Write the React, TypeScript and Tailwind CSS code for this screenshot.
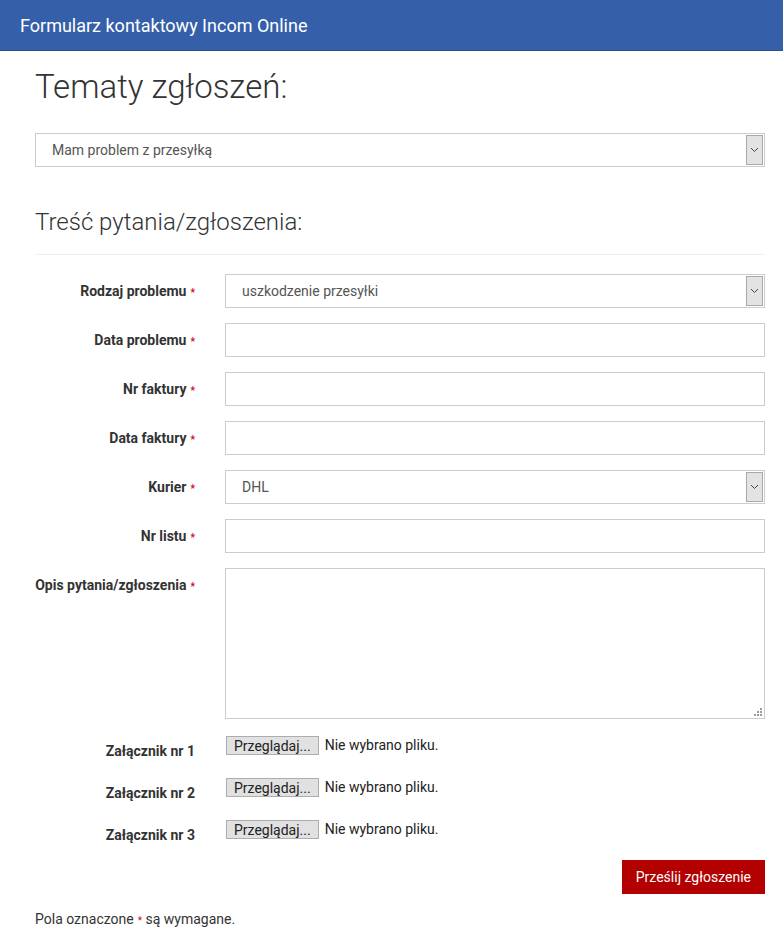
import { ReactNode } from 'react';

const font = { fontFamily: 'Roboto, "Noto Sans", sans-serif' };

function Req() {
  return <span className="ml-1 text-[10px] text-[#d0021b]">*</span>;
}

function ArrowBox() {
  return (
    <div className="pointer-events-none absolute right-[1px] top-[1px] bottom-[1px] w-[17px] bg-[#e3e3e3] border border-[#a9a9a9] flex items-center justify-center">
      <svg width="9" height="6" viewBox="0 0 9 6" fill="none">
        <path d="M1 1l3.5 3.5L8 1" stroke="#444" strokeWidth="1" />
      </svg>
    </div>
  );
}

function SelectBox({ value }: { value: string }) {
  return (
    <div className="relative h-[34px] w-full border border-[#cccccc] bg-white">
      <div className="h-full flex items-center pl-4 text-[14px] text-[#555]">{value}</div>
      <ArrowBox />
    </div>
  );
}

function Row({ label, children }: { label: string; children: ReactNode }) {
  return (
    <div className="flex mb-[15px]">
      <div className="w-[160px] shrink-0 text-right pt-[7px] text-[14px] leading-5 font-bold text-[#333] whitespace-nowrap">
        {label}
        <Req />
      </div>
      <div className="ml-[30px] flex-1">{children}</div>
    </div>
  );
}

function Input() {
  return <div className="h-[34px] w-full border border-[#cccccc] bg-white" />;
}

function Grip() {
  // resize handle dots in the textarea corner
  const dots = [
    [6, 0],
    [3, 3], [6, 3],
    [0, 6], [3, 6], [6, 6],
  ];
  return (
    <svg className="pointer-events-none absolute right-[3px] bottom-[3px]" width="8" height="8" viewBox="0 0 8 8">
      {dots.map(([x, y]) => (
        <rect key={`${x}-${y}`} x={x} y={y} width="2" height="2" fill="#9a9a9a" />
      ))}
    </svg>
  );
}

function FileRow({ n }: { n: number }) {
  return (
    <div className="flex h-[42px]">
      <div className="w-[160px] shrink-0 text-right pt-[5px] text-[14px] leading-5 font-bold text-[#333]">Załącznik nr {n}</div>
      <div className="ml-[31px] flex items-start gap-[6px] text-[14px] text-[#222]">
        <span className="h-[19px] px-[7px] flex items-center bg-[#e1e1e1] border border-[#adadad] leading-none">Przeglądaj...</span>
        <span className="leading-[19px]">Nie wybrano pliku.</span>
      </div>
    </div>
  );
}

export default function App() {
  return (
    <div className="min-h-screen bg-white" style={font}>
      <div className="h-[51px] bg-[#3560a9] border-b border-[#2a4d88] flex items-center pl-5">
        <span className="text-white text-[18px]">Formularz kontaktowy Incom Online</span>
      </div>

      <div className="pl-[35px] pr-[18px]">
        <h1 className="mt-[16px] text-[33px] leading-[40px] font-light text-[#333]">Tematy zgłoszeń:</h1>
        <div className="mt-[26px]">
          <SelectBox value="Mam problem z przesyłką" />
        </div>

        <h3 className="mt-[40px] text-[24px] leading-[30px] font-light text-[#333]">Treść pytania/zgłoszenia:</h3>
        <div className="mt-[17px] border-t border-[#eeeeee]" />

        <div className="mt-[19px]">
          <Row label="Rodzaj problemu">
            <SelectBox value="uszkodzenie przesyłki" />
          </Row>
          <Row label="Data problemu"><Input /></Row>
          <Row label="Nr faktury"><Input /></Row>
          <Row label="Data faktury"><Input /></Row>
          <Row label="Kurier">
            <SelectBox value="DHL" />
          </Row>
          <Row label="Nr listu"><Input /></Row>
          <Row label="Opis pytania/zgłoszenia">
            <div className="relative">
              <textarea className="block h-[151px] w-full border border-[#cccccc] bg-white resize-none outline-none" />
              <Grip />
            </div>
          </Row>
        </div>

        <div className="pt-[2px]">
          <FileRow n={1} />
          <FileRow n={2} />
          <FileRow n={3} />
        </div>

        <div className="flex justify-end mt-[-2px]">
          <button className="h-[34px] px-[14px] bg-[#b30000] text-white text-[14px]">Prześlij zgłoszenie</button>
        </div>

        <p className="mt-[15px] text-[14px] text-[#333]">
          Pola oznaczone<Req /> są wymagane.
        </p>
      </div>
    </div>
  );
}
